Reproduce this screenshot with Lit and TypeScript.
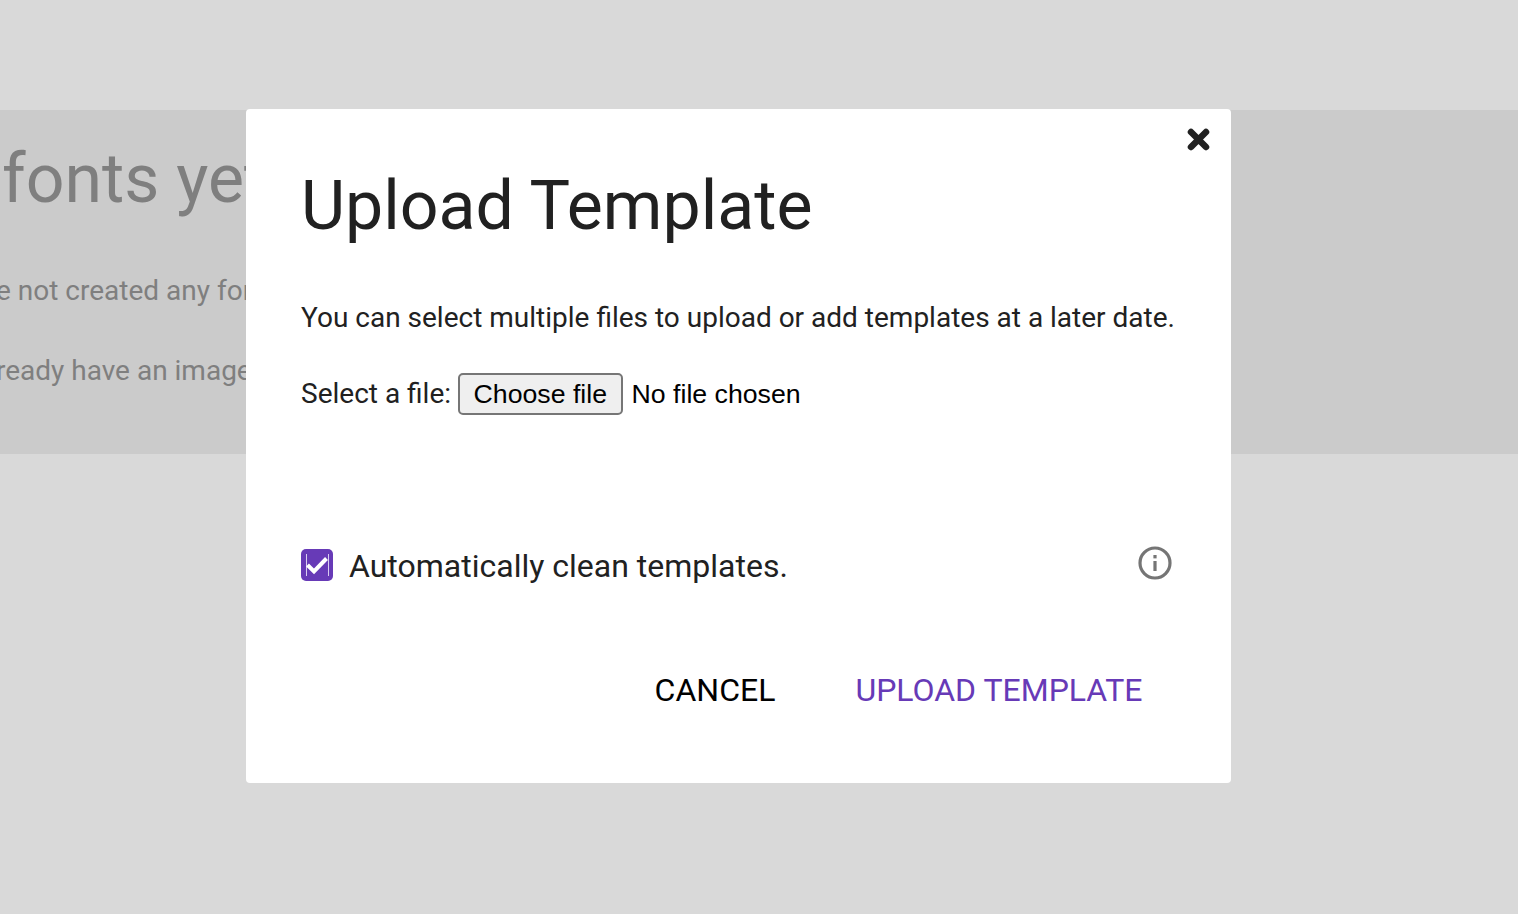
import { LitElement, html, css } from "lit";
import { customElement } from "lit/decorators.js";

@customElement("app-root")
export class AppRoot extends LitElement {
  static styles = css`
    :host { display: block; position: relative; height: 914px; overflow: hidden; background: #d9d9d9; font-family: Roboto, sans-serif; }
    .top { height: 110px; }
    .band { height: 344px; background: #cbcbcb; color: #7f7f7f; overflow: hidden; white-space: nowrap; box-sizing: border-box; padding-top: 29px; }
    .h { font-size: 68px; line-height: 80px; padding-left: 2px; }
    .l1 { font-size: 28px; line-height: 34px; margin-top: 55px; margin-left: -4px; }
    .l2 { font-size: 28px; line-height: 34px; margin-top: 46px; margin-left: -4px; }
    .modal { position: absolute; left: 246px; top: 109px; width: 985px; height: 674px; box-sizing: border-box; background: #fff; border-radius: 4px; padding: 57px 55px 0; color: #212121; }
    .close { position: absolute; left: 940px; top: 18px; width: 25px; height: 25px; display: block; }
    h1 { margin: 0; font-size: 68px; line-height: 80px; font-weight: 400; }
    .desc { margin: 54px 0 0; font-size: 28px; line-height: 36px; }
    .file { display: flex; align-items: center; margin-top: 37px; height: 42px; font-size: 28px; gap: 6.5px; }
    .label { margin-top: -2px; }
    .pick { display: flex; align-items: center; gap: 8.5px; font-family: "Liberation Sans", Arial, sans-serif; font-size: 26.7px; color: #000; }
    .pick button { height: 42px; width: 165.5px; padding: 0; font: inherit; color: #000; background: #efefef; border: 2px solid #767676; border-radius: 5px; }
    .check { display: flex; align-items: center; margin-top: 134px; height: 34px; font-size: 32px; gap: 16px; }
    .box { width: 32px; height: 32px; display: block; flex: none; margin-bottom: 2px; }
    .info { margin-left: auto; margin-right: 4px; margin-top: -6px; width: 34px; height: 34px; display: block; }
    .actions { display: flex; justify-content: flex-end; gap: 80px; margin-top: 88px; padding-right: 33.5px; font-size: 32px; line-height: 38px; }
    .cancel { color: #000; }
    .upload { color: #673ab7; }
  `;
  render() {
    return html`
      <div class="top"></div>
      <div class="band">
        <div class="h">fonts yet</div>
        <div class="l1">e not created any fonts</div>
        <div class="l2">ready have an image</div>
      </div>
      <div class="modal">
        <svg class="close" viewBox="0 0 25 25"><path d="M5 5L20 20M20 5L5 20" stroke="#212121" stroke-width="6.5" stroke-linecap="round" fill="none"/></svg>
        <h1>Upload Template</h1>
        <p class="desc">You can select multiple files to upload or add templates at a later date.</p>
        <div class="file"><span class="label">Select a file:</span><div class="pick"><button type="button">Choose file</button><span>No file chosen</span></div></div>
        <div class="check">
          <svg class="box" viewBox="0 0 32 32"><rect width="32" height="32" rx="5" fill="#673ab7"/><path d="M5.5 5V27M27.5 5V27" stroke="#d9cdf0" stroke-width="1" fill="none"/><path d="M6.5 16L13 22.5L25.5 9.5" stroke="#fff" stroke-width="4" fill="none"/></svg>
          <span>Automatically clean templates.</span>
          <svg class="info" viewBox="0 0 34 34"><circle cx="17" cy="17" r="15" stroke="#757575" stroke-width="3.2" fill="none"/><rect x="15.4" y="15" width="3.2" height="10" fill="#757575"/><rect x="15.4" y="9" width="3.2" height="3.4" fill="#757575"/></svg>
        </div>
        <div class="actions"><span class="cancel">CANCEL</span><span class="upload">UPLOAD TEMPLATE</span></div>
      </div>
    `;
  }
}
